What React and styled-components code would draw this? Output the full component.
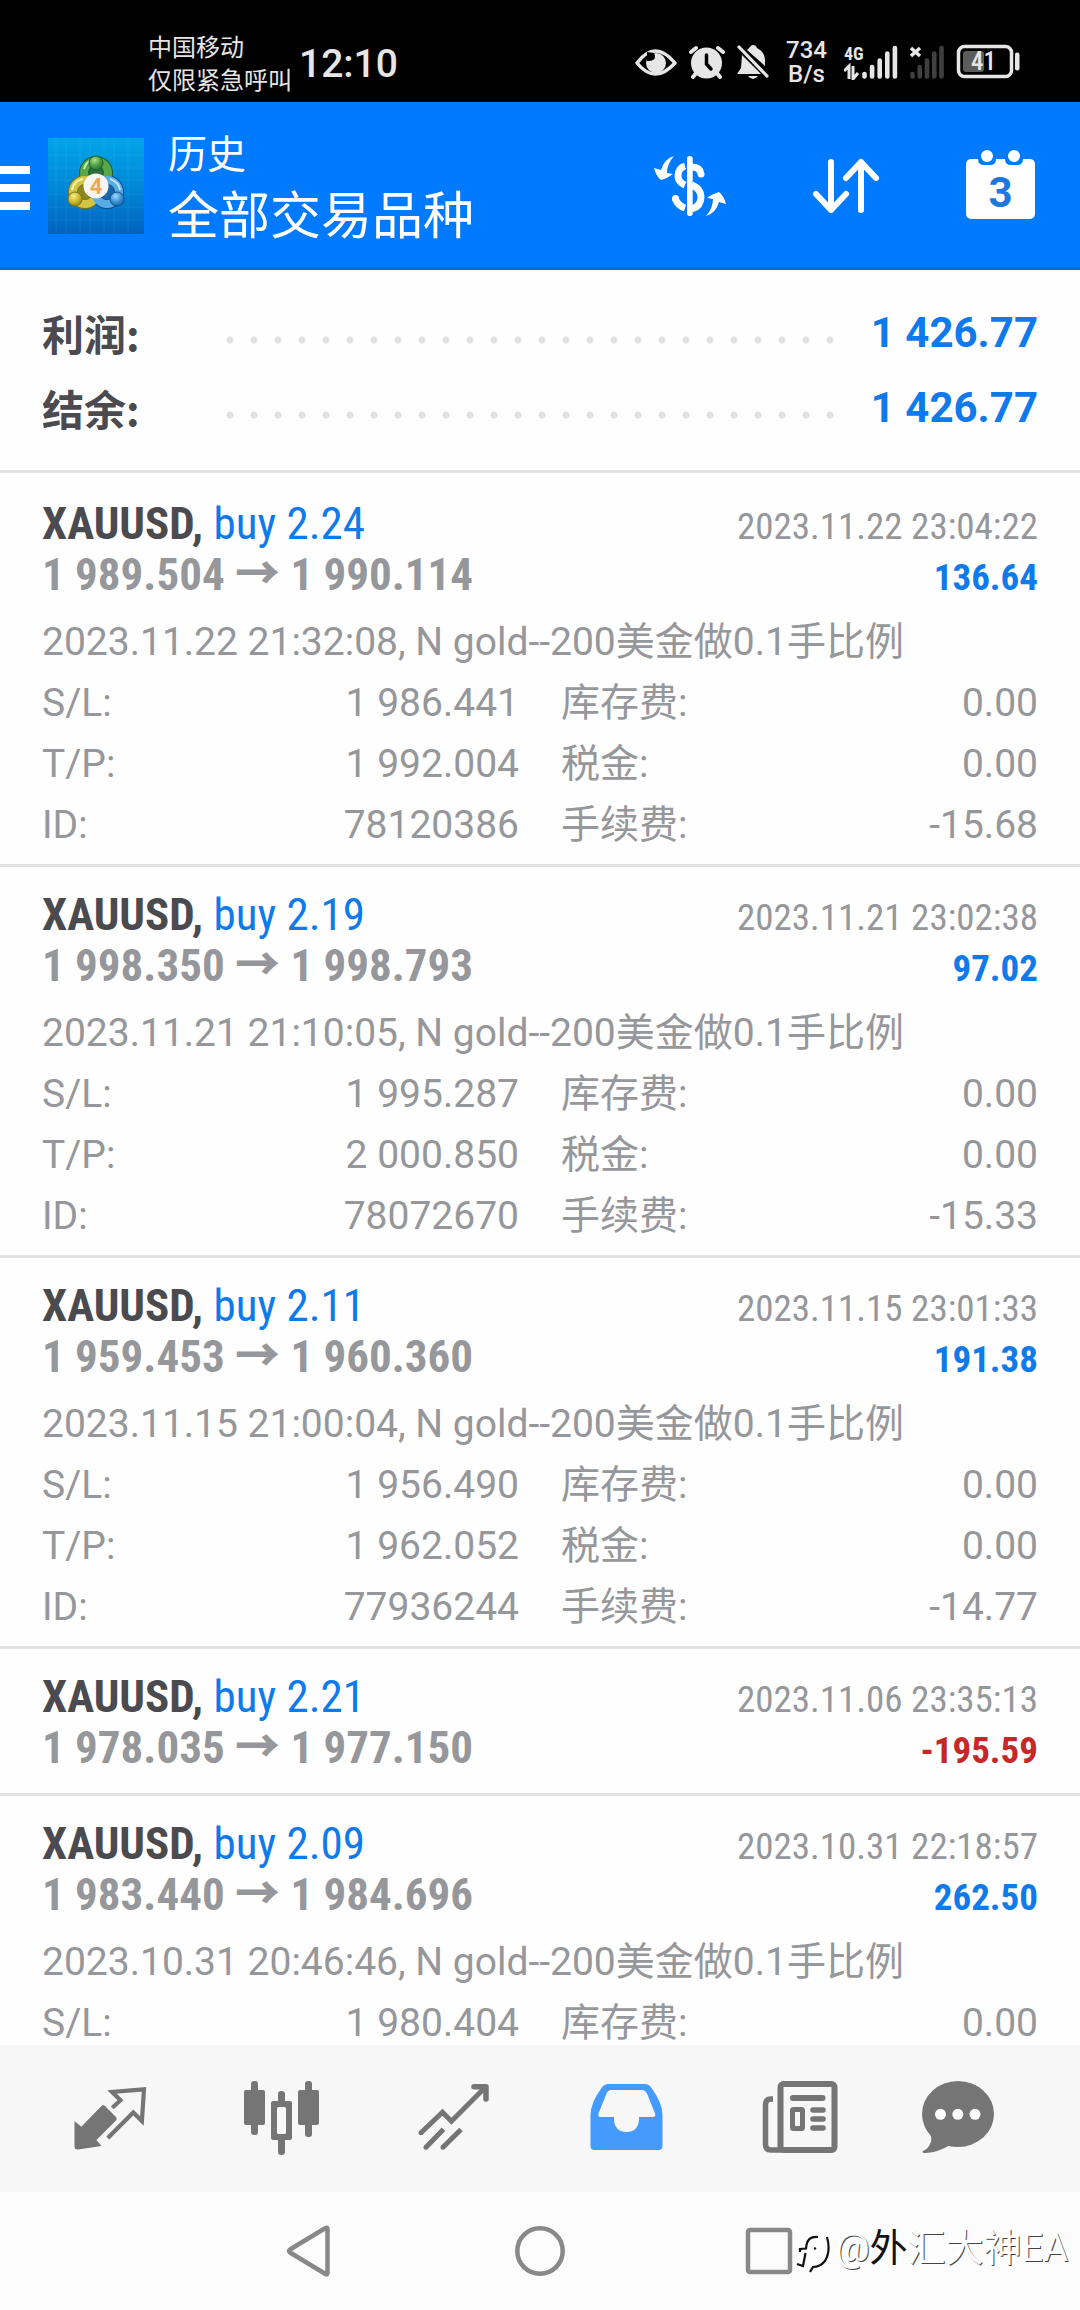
import React, { useState } from 'react';
import styled, { createGlobalStyle } from 'styled-components';

const GlobalStyle = createGlobalStyle`
  * {
    box-sizing: border-box;
  }
  body {
    margin: 0;
    background-color: #fefefe;
    font-family: Roboto, 'Noto Sans CJK SC', sans-serif;
  }
  button {
    padding: 0;
    border: none;
    background: none;
    font: inherit;
    cursor: pointer;
  }
  svg {
    display: block;
  }
`;

const Page = styled.div`
  display: flex;
  flex-direction: column;
  height: 100vh;
  overflow: hidden;
`;

const StatusBar = styled.div`
  display: flex;
  align-items: center;
  height: 102px;
  padding: 22px 60px 0 148px;
  background-color: #000;
  color: #e6e6e6;
`;

const Clock = styled.div`
  display: flex;
  align-items: flex-end;
  gap: 7px;
`;

const Carrier = styled.div`
  font-family: 'Noto Sans CJK SC', sans-serif;
  font-size: 24px;
  line-height: 33px;
  white-space: nowrap;
`;

const Time = styled.span`
  font-size: 39px;
  line-height: 61px;
  font-weight: 500;
`;

const StatusIcons = styled.div`
  display: flex;
  align-items: center;
  gap: 12px;
  margin-left: auto;
`;

const Speed = styled.div`
  padding: 0 5px;
  font-size: 24px;
  line-height: 24px;
  font-weight: 500;
  text-align: center;
`;

const Header = styled.header`
  display: flex;
  align-items: center;
  height: 168px;
  padding: 3px 42px 0 0;
  background-color: #007aff;
  border-bottom: 3px solid #1368cc;
  color: #fff;
`;

const Titles = styled.div`
  flex: 1;
  padding-left: 24px;
  line-height: 61px;
`;

const Subtitle = styled.div`
  font-size: 39px;
`;

const Title = styled.h1`
  margin: 0;
  font-size: 51px;
  font-weight: 400;
`;

const Actions = styled.div`
  display: flex;
  gap: 84px;
`;

const History = styled.main`
  flex: 1;
  min-height: 0;
  overflow: hidden;
`;

const Summary = styled.dl`
  margin: 0 0 3px;
  padding: 25px 42px;
  border-bottom: 3px solid #e2e2e2;
`;

const SummaryRow = styled.div`
  display: flex;
  align-items: center;
  font-size: 42px;
  line-height: 75px;
  font-weight: 700;
`;

const SummaryLabel = styled.dt`
  width: 176px;
  font-family: 'Noto Sans CJK SC', sans-serif;
  color: #4a4a4f;
`;

const Dots = styled.span`
  flex: 1;
  height: 24px;
  margin: 15px 32px 0 0;
  background: radial-gradient(circle, #e1e1e1 3px, transparent 4px) 0 0 / 24px 24px;
`;

const SummaryValue = styled.dd`
  margin: 0;
  color: #0f7aeb;
`;

const Deal = styled.article`
  padding: 22px 42px ${(props) => (props.$open ? '8px' : '20px')};
  border-bottom: 3px solid #e2e2e2;
`;

const DealRow = styled.div`
  display: flex;
  justify-content: space-between;
  align-items: baseline;
  height: 51px;
  font-family: 'Roboto Condensed', Roboto, 'Noto Sans CJK SC', sans-serif;
  line-height: 51px;
`;

const Symbol = styled.span`
  font-size: 45px;
  font-weight: 700;
  color: #4a4a4f;
`;

const Side = styled.span`
  font-weight: 400;
  color: #0f7aeb;
`;

const Prices = styled.span`
  font-size: 45px;
  font-weight: 700;
  color: #96979a;
`;

const Arrow = styled.span`
  font-weight: 900;
`;

const CloseTime = styled.time`
  font-size: 37px;
  color: #96979a;
`;

const Profit = styled.span`
  font-size: 37px;
  font-weight: 700;
  color: ${(props) => (props.$loss ? '#c62828' : '#0f7aeb')};
`;

const Details = styled.div`
  margin-top: 12px;
  font-size: 39px;
  line-height: 61px;
  color: #96979a;
`;

const DetailGrid = styled.dl`
  display: grid;
  grid-template-columns: 1fr 1fr;
  column-gap: 42px;
  margin: 0;
`;

const Detail = styled.div`
  display: flex;
  justify-content: space-between;

  dd {
    margin: 0;
  }
`;

const TabBar = styled.nav`
  display: flex;
  align-items: center;
  height: 147px;
  padding: 0 24px;
  background-color: #f7f7f7;
`;

const Tab = styled.button`
  flex: 1;
  display: flex;
  justify-content: center;
  color: ${(props) => (props.$active ? '#459bfd' : '#757575')};
`;

const SystemBar = styled.div`
  position: relative;
  display: flex;
  align-items: center;
  height: 118px;
  padding: 0 192px;
  background-color: #fcfcfc;
`;

const SystemButton = styled.button`
  flex: 1;
  display: flex;
  justify-content: center;
`;

const Watermark = styled.div`
  position: absolute;
  right: 12px;
  top: 31px;
  display: flex;
  align-items: center;
  gap: 4px;
  font-size: 38px;
  line-height: 50px;
  color: #fff;
  text-shadow: 1px 1px 0 #444;
`;

const Strong = styled.span`
  color: #111;
  text-shadow: none;
`;

const EyeIcon = () => (
  <svg width="42" height="36" viewBox="0 0 42 36">
    <path d="M2 19 Q20 -5 40 19 Q20 41 2 19Z" fill="none" stroke="#e6e6e6" strokeWidth="3.5" strokeLinejoin="round" />
    <circle cx="21" cy="19" r="10" fill="#e6e6e6" />
    <path d="M19 9 Q23 17 12 17 L12 8Z" fill="#000" />
  </svg>
);

const AlarmIcon = () => (
  <svg width="36" height="36" viewBox="0 0 36 36">
    <g stroke="#e6e6e6" strokeWidth="4" strokeLinecap="round" fill="none">
      <path d="M2 8 L7 4 M29 4 L34 8 M8 28 L4 33 M27 28 L31 33" />
    </g>
    <circle cx="17.5" cy="19" r="15.5" fill="#e6e6e6" />
    <path d="M17.5 11 V20 L22 25" fill="none" stroke="#000" strokeWidth="3.5" strokeLinecap="round" />
  </svg>
);

const BellOffIcon = () => (
  <svg width="32" height="36" viewBox="0 0 32 36">
    <path d="M16 1 Q19 1 20 4 Q28 8 28 17 V22 L10 6 Q12 4 13 3 Q14 1 16 1Z" fill="#e6e6e6" />
    <path d="M5 11 L24 30 H0 L4 24Z" fill="#e6e6e6" />
    <path d="M11 32 H21 Q16 38 11 32Z" fill="#e6e6e6" />
    <path d="M2 3 L30 32" stroke="#e6e6e6" strokeWidth="3.2" strokeLinecap="round" />
  </svg>
);

const SignalIcon = () => (
  <svg width="54" height="36" viewBox="0 0 54 36">
    <text x="0" y="16" fontSize="18" fontWeight="700" fill="#e6e6e6" fontFamily="'Roboto Condensed', Roboto">
      4G
    </text>
    <path d="M0 27 L5 22 V35 M9 22 V35 L14 29" fill="none" stroke="#e6e6e6" strokeWidth="3" />
    <path
      d="M20.5 30v2.5M28.1 23v9.500M35.700 16.500v16M43.300 9.500v23M50.900 4v28.500"
      stroke="#e6e6e6"
      strokeWidth="4.6"
      strokeLinecap="round"
    />
  </svg>
);

const NoSignalIcon = () => (
  <svg width="34" height="36" viewBox="0 0 34 36">
    <path d="M1 4 L10 12 M10 4 L1 12" stroke="#e6e6e6" strokeWidth="3.5" />
    <path d="M2.500 30v2.500M9.700 23v9.500M17 16.500v16M24.300 9.500v23M31.500 4v28.500" stroke="#3f3f3f" strokeWidth="4.6" strokeLinecap="round" />
  </svg>
);

const BatteryIcon = () => (
  <svg width="64" height="36" viewBox="-1 0 64 36">
    <rect x="1.5" y="2.5" width="53" height="30" rx="6" fill="none" stroke="#e6e6e6" strokeWidth="3.5" />
    <rect x="6" y="7" width="21" height="21" rx="3" fill="#5c5c5c" />
    <rect x="58" y="8.500" width="4.500" height="18" rx="2" fill="#e6e6e6" />
    <text x="26.500" y="26" fontSize="25" fontWeight="500" textAnchor="middle" fill="#e6e6e6" fontFamily="'Roboto Condensed', Roboto">
      41
    </text>
  </svg>
);

const MenuIcon = () => (
  <svg width="48" height="48" viewBox="0 0 48 48" fill="#fff">
    <rect y="4" width="30" height="8" />
    <rect y="22" width="30" height="8" />
    <rect y="40" width="30" height="8" />
  </svg>
);

const AppLogo = () => (
  <svg width="96" height="96" viewBox="0 0 96 96">
    <defs>
      <linearGradient id="sky" x1="0" y1="0" x2="0" y2="1">
        <stop offset="0" stopColor="#00a6e8" />
        <stop offset="0.5" stopColor="#0088d8" />
        <stop offset="1" stopColor="#0063bd" />
      </linearGradient>
      <radialGradient id="green" cx="0.4" cy="0.3" r="0.8">
        <stop offset="0" stopColor="#a9e08c" />
        <stop offset="0.5" stopColor="#4da047" />
        <stop offset="1" stopColor="#226b2a" />
      </radialGradient>
      <radialGradient id="yellow" cx="0.4" cy="0.3" r="0.8">
        <stop offset="0" stopColor="#f7f08a" />
        <stop offset="0.5" stopColor="#cdb92e" />
        <stop offset="1" stopColor="#8f7c12" />
      </radialGradient>
      <radialGradient id="blue" cx="0.4" cy="0.3" r="0.8">
        <stop offset="0" stopColor="#a4dbff" />
        <stop offset="0.5" stopColor="#3d93d4" />
        <stop offset="1" stopColor="#165f9f" />
      </radialGradient>
    </defs>
    <rect width="96" height="96" fill="url(#sky)" />
    <path
      d="M8 0V96M18 0V96M32 0V96M42 0V96M56 0V96M66 0V96M80 0V96M0 17H96M0 30H96M0 42H96M0 56H96M0 69H96M0 82H96"
      stroke="#5fd0f5"
      strokeOpacity="0.14"
    />
    <circle cx="48" cy="35" r="12" fill="#2c6e3c" stroke="#1c5f2c" strokeWidth="10" />
    <circle cx="37" cy="54" r="12" fill="#8d8422" stroke="#7b7218" strokeWidth="10" />
    <circle cx="59" cy="54" r="12" fill="#1b68a8" stroke="#0f4f8b" strokeWidth="10" />
    <circle cx="48" cy="35" r="12" fill="none" stroke="#5aa74b" strokeWidth="8" />
    <circle cx="37" cy="54" r="12" fill="none" stroke="#d3c544" strokeWidth="8" />
    <circle cx="59" cy="54" r="12" fill="none" stroke="#58ace6" strokeWidth="8" />
    <path d="M36 31 Q38 24 44 22" fill="none" stroke="#c4ecac" strokeWidth="2" />
    <path d="M24 52 Q26 42 35 41" fill="none" stroke="#faf6ae" strokeWidth="2" />
    <path d="M62 41 Q71 44 72 52" fill="none" stroke="#bde4ff" strokeWidth="2" />
    <circle cx="48" cy="25" r="7" fill="url(#green)" stroke="#1c5f2c" />
    <circle cx="27" cy="61" r="7" fill="url(#yellow)" stroke="#7b7218" />
    <circle cx="69" cy="61" r="7" fill="url(#blue)" stroke="#0f4f8b" />
    <circle cx="48" cy="48" r="12.5" fill="#f8f6f2" />
    <text x="48" y="56" fontSize="22" fontWeight="700" textAnchor="middle" fill="#f2a65a" fontFamily="Roboto">
      4
    </text>
  </svg>
);

const CurrencyIcon = () => (
  <svg width="72" height="72" viewBox="0 0 72 72">
    <g transform="translate(0 6)">
      <g fill="#fff">
        <rect x="33" width="5.7" height="60" rx="2.8" />
        <path d="M20 0 Q10 3 7 14 L0 12 Q2 20 7 24 Q14 22 19 18 L13 17 Q13 8 20 0Z" />
        <path d="M20 0 Q10 3 7 14 L0 12 Q2 20 7 24 Q14 22 19 18 L13 17 Q13 8 20 0Z" transform="rotate(180 36 30)" />
      </g>
      <g fill="none" stroke="#fff" strokeWidth="7">
        <path d="M38 11 Q46 11 47 18" strokeLinecap="round" />
        <path d="M31 10 Q24 12 24 20 Q24 26 31 29" />
        <path d="M38 29 Q47 33 47 41 Q47 50 38 53" />
        <path d="M31 52 Q24 50 21 42" />
      </g>
      <circle cx="21.5" cy="42.5" r="3.5" fill="#fff" />
    </g>
  </svg>
);

const SortIcon = () => (
  <svg width="72" height="72" viewBox="0 0 72 72" fill="none" stroke="#fff" strokeWidth="6" strokeLinecap="round" strokeLinejoin="round">
    <path d="M21 12 V60 M6 44 L21 60 L36 44" />
    <path d="M51 60 V12 M36 28 L51 12 L66 28" />
  </svg>
);

const CalendarIcon = () => (
  <svg width="72" height="72" viewBox="0 0 72 72">
    <rect y="9" width="69" height="60" rx="5" fill="#fff" />
    <path d="M12 6 H30 V9 Q30 15 24 15 H18 Q12 15 12 9Z M39 6 H57 V9 Q57 15 51 15 H45 Q39 15 39 9Z" fill="#007aff" />
    <circle cx="21" cy="6" r="6" fill="#fff" />
    <circle cx="48" cy="6" r="6" fill="#fff" />
    <text x="34.5" y="57" fontSize="42" fontWeight="700" textAnchor="middle" fill="#1c78dd" fontFamily="Roboto">
      3
    </text>
  </svg>
);

const QuotesIcon = () => (
  <svg width="96" height="99" viewBox="0 0 96 99">
    <path
      d="M12.5 52 L19.3 57.7 L39 37.5 Q41 35 43.5 37.5 L54 48 Q55.5 50 54 51.5 L34.4 71 L39.5 77 L16 80.5 Q12.5 81 12.5 77Z"
      fill="currentColor"
    />
    <path d="M50.3 38.7 L58.5 31.3 L50 23 L82 20.3 L79.9 52 L71.3 43.5 L45.8 69" fill="none" stroke="currentColor" strokeWidth="4.2" />
  </svg>
);

const CandlesIcon = () => (
  <svg width="96" height="99" viewBox="0 0 96 99" fill="currentColor">
    <rect x="10" y="21" width="21" height="35" rx="2" />
    <rect x="17" y="12" width="7" height="54" rx="3" />
    <path fillRule="evenodd" d="M39 32 H56 Q58 32 58 34 V69 Q58 71 56 71 H39 Q37 71 37 69 V34 Q37 32 39 32Z M44.5 38 Q43 38 43 39.5 V63.5 Q43 65 44.5 65 H50.5 Q52 65 52 63.5 V39.5 Q52 38 50.5 38Z" />
    <path d="M44 34 V25 Q44 22 47.5 22 Q51 22 51 25 V34Z M44 69 V83 Q44 86 47.5 86 Q51 86 51 83 V69Z" />
    <rect x="64" y="21" width="21" height="35" rx="2" />
    <rect x="71" y="12" width="7" height="56" rx="3" />
  </svg>
);

const ChartIcon = () => (
  <svg width="96" height="99" viewBox="0 0 96 99" fill="none" stroke="currentColor" strokeWidth="5">
    <circle cx="15" cy="63.7" r="2.5" fill="currentColor" stroke="none" />
    <circle cx="20" cy="78.3" r="2.5" fill="currentColor" stroke="none" />
    <circle cx="37" cy="78.3" r="2.5" fill="currentColor" stroke="none" />
    <path d="M15 63.7 L36.5 43.3 L45.4 52.3 L79.5 18" />
    <path d="M68 17.7 H80 V30" strokeWidth="5.5" strokeLinecap="round" strokeLinejoin="round" />
    <path d="M20 78.3 L37.5 60.3 M37 78.3 L55 60.5" />
  </svg>
);

const InboxIcon = () => (
  <svg width="96" height="99" viewBox="0 0 96 99" fill="currentColor">
    <path
      fillRule="evenodd"
      d="M31 15 H67 Q71 15 73.5 19 Q84.5 34 84.5 46 V77 Q84.5 81 80.5 81 H16.5 Q12.5 81 12.5 77 V46 Q12.5 34 23.5 19 Q26 15 31 15Z M33 21 Q30 21 28.5 24.5 L20.5 44.5 Q19.5 48 22.5 48 H36 V51 Q37 63 48.5 63 Q60 63 61 51 V48 H75 Q78 48 77 44.5 L69 24.5 Q67 21 64 21Z"
    />
  </svg>
);

const NewsIcon = () => (
  <svg width="96" height="99" viewBox="0 0 96 99" fill="none" stroke="currentColor" strokeWidth="6">
    <rect x="30.5" y="15" width="54" height="66" rx="3" />
    <path d="M23 30 H21 Q15.5 30 15.5 36 V75 Q15.5 81 21 81 H32" strokeWidth="5.5" />
    <path d="M43 29 H72.5" strokeLinecap="round" />
    <rect x="42.5" y="40.5" width="10" height="19" rx="1" strokeWidth="5" />
    <path d="M63 41 H73 M63 50 H73 M63 59 H73" strokeWidth="5.6" strokeLinecap="round" />
  </svg>
);

const ChatIcon = () => (
  <svg width="96" height="99" viewBox="0 0 96 99">
    <ellipse cx="36" cy="45" rx="36" ry="33" fill="currentColor" />
    <path d="M4 60 Q12 68 8 75 Q6 80 1 82 Q-1 84 4 84 Q17 83 28 76 L34 70Z" fill="currentColor" />
    <circle cx="18.5" cy="45.3" r="5.5" fill="#fff" />
    <circle cx="35.8" cy="45.3" r="5.5" fill="#fff" />
    <circle cx="53" cy="45.3" r="5.5" fill="#fff" />
  </svg>
);

const BackIcon = () => (
  <svg width="64" height="64" viewBox="0 0 64 64" fill="none" stroke="#888" strokeWidth="4.5" strokeLinejoin="round">
    <path d="M51.5 10 Q51.5 8 49.5 9 L14 30.5 Q12 32 14 33.5 L49.5 55 Q51.5 56 51.5 54Z" />
  </svg>
);

const HomeIcon = () => (
  <svg width="64" height="64" viewBox="0 0 64 64" fill="none" stroke="#888" strokeWidth="4.5">
    <circle cx="32" cy="32" r="22.7" />
  </svg>
);

const RecentIcon = () => (
  <svg width="64" height="64" viewBox="0 0 64 64" fill="none" stroke="#888" strokeWidth="4.5">
    <rect x="8" y="11" width="42" height="42" rx="2" />
  </svg>
);

const WatermarkLogo = () => (
  <svg width="40" height="50" viewBox="-3 -4 40 50">
    <path d="M8 3 Q2 20 4 36 L28 38 Q38 20 32 4Z" fill="#fcfcfc" stroke="#fcfcfc" strokeWidth="6" />
    <g fill="none" stroke="#111" strokeWidth="2.2">
      <path d="M24 10 Q14 9 12.5 18 L12 21.5 L6 22 V25" />
      <path d="M11.5 26 L9 39 L3 37" />
      <path d="M33 10 Q37 24 31 34 Q26 40 19 40 L16 45" />
    </g>
    <circle cx="21" cy="21.5" r="1.2" fill="#111" />
  </svg>
);

const summary = [
  { label: '利润:', value: '1 426.77' },
  { label: '结余:', value: '1 426.77' }
];

const deals = [
  {
    id: 1,
    side: 'buy 2.24',
    open: '1 989.504',
    close: '1 990.114',
    closeTime: '2023.11.22 23:04:22',
    profit: '136.64',
    comment: '2023.11.22 21:32:08, N gold--200美金做0.1手比例',
    details: [
      ['S/L:', '1 986.441'],
      ['库存费:', '0.00'],
      ['T/P:', '1 992.004'],
      ['税金:', '0.00'],
      ['ID:', '78120386'],
      ['手续费:', '-15.68']
    ]
  },
  {
    id: 2,
    side: 'buy 2.19',
    open: '1 998.350',
    close: '1 998.793',
    closeTime: '2023.11.21 23:02:38',
    profit: '97.02',
    comment: '2023.11.21 21:10:05, N gold--200美金做0.1手比例',
    details: [
      ['S/L:', '1 995.287'],
      ['库存费:', '0.00'],
      ['T/P:', '2 000.850'],
      ['税金:', '0.00'],
      ['ID:', '78072670'],
      ['手续费:', '-15.33']
    ]
  },
  {
    id: 3,
    side: 'buy 2.11',
    open: '1 959.453',
    close: '1 960.360',
    closeTime: '2023.11.15 23:01:33',
    profit: '191.38',
    comment: '2023.11.15 21:00:04, N gold--200美金做0.1手比例',
    details: [
      ['S/L:', '1 956.490'],
      ['库存费:', '0.00'],
      ['T/P:', '1 962.052'],
      ['税金:', '0.00'],
      ['ID:', '77936244'],
      ['手续费:', '-14.77']
    ]
  },
  {
    id: 4,
    side: 'buy 2.21',
    open: '1 978.035',
    close: '1 977.150',
    closeTime: '2023.11.06 23:35:13',
    profit: '-195.59'
  },
  {
    id: 5,
    side: 'buy 2.09',
    open: '1 983.440',
    close: '1 984.696',
    closeTime: '2023.10.31 22:18:57',
    profit: '262.50',
    comment: '2023.10.31 20:46:46, N gold--200美金做0.1手比例',
    details: [
      ['S/L:', '1 980.404'],
      ['库存费:', '0.00']
    ]
  }
];

const tabs = [
  { id: 'quotes', label: '行情', icon: <QuotesIcon /> },
  { id: 'charts', label: '图表', icon: <CandlesIcon /> },
  { id: 'trade', label: '交易', icon: <ChartIcon /> },
  { id: 'history', label: '历史', icon: <InboxIcon /> },
  { id: 'news', label: '新闻', icon: <NewsIcon /> },
  { id: 'chat', label: '消息', icon: <ChatIcon /> }
];

const DealItem = ({ deal }) => (
  <Deal $open={!!deal.details}>
    <DealRow>
      <Symbol>
        XAUUSD, <Side>{deal.side}</Side>
      </Symbol>
      <CloseTime>{deal.closeTime}</CloseTime>
    </DealRow>
    <DealRow>
      <Prices>
        {deal.open} <Arrow>→</Arrow> {deal.close}
      </Prices>
      <Profit $loss={deal.profit.startsWith('-')}>{deal.profit}</Profit>
    </DealRow>
    {deal.details && (
      <Details>
        <div>{deal.comment}</div>
        <DetailGrid>
          {deal.details.map(([label, value]) => (
            <Detail key={label}>
              <dt>{label}</dt>
              <dd>{value}</dd>
            </Detail>
          ))}
        </DetailGrid>
      </Details>
    )}
  </Deal>
);

const App = () => {
  const [activeTab, setActiveTab] = useState('history');

  return (
    <Page>
      <GlobalStyle />
      <StatusBar>
        <Clock>
          <Carrier>
            <div>中国移动</div>
            <div>仅限紧急呼叫</div>
          </Carrier>
          <Time>12:10</Time>
        </Clock>
        <StatusIcons>
          <EyeIcon />
          <AlarmIcon />
          <BellOffIcon />
          <Speed>
            <div>734</div>
            <div>B/s</div>
          </Speed>
          <SignalIcon />
          <NoSignalIcon />
          <BatteryIcon />
        </StatusIcons>
      </StatusBar>

      <Header>
        <button aria-label="菜单">
          <MenuIcon />
        </button>
        <AppLogo />
        <Titles>
          <Subtitle>历史</Subtitle>
          <Title>全部交易品种</Title>
        </Titles>
        <Actions>
          <button aria-label="交易品种">
            <CurrencyIcon />
          </button>
          <button aria-label="排序">
            <SortIcon />
          </button>
          <button aria-label="日期">
            <CalendarIcon />
          </button>
        </Actions>
      </Header>

      <History>
        <Summary>
          {summary.map((row) => (
            <SummaryRow key={row.label}>
              <SummaryLabel>{row.label}</SummaryLabel>
              <Dots />
              <SummaryValue>{row.value}</SummaryValue>
            </SummaryRow>
          ))}
        </Summary>
        {deals.map((deal) => (
          <DealItem key={deal.id} deal={deal} />
        ))}
      </History>

      <TabBar>
        {tabs.map((tab) => (
          <Tab key={tab.id} aria-label={tab.label} $active={tab.id === activeTab} onClick={() => setActiveTab(tab.id)}>
            {tab.icon}
          </Tab>
        ))}
      </TabBar>

      <SystemBar>
        <SystemButton aria-label="返回">
          <BackIcon />
        </SystemButton>
        <SystemButton aria-label="主页">
          <HomeIcon />
        </SystemButton>
        <SystemButton aria-label="最近">
          <RecentIcon />
        </SystemButton>
        <Watermark>
          <WatermarkLogo />
          <span>
            @<Strong>外</Strong>汇大神EA
          </span>
        </Watermark>
      </SystemBar>
    </Page>
  );
};

export default App;
